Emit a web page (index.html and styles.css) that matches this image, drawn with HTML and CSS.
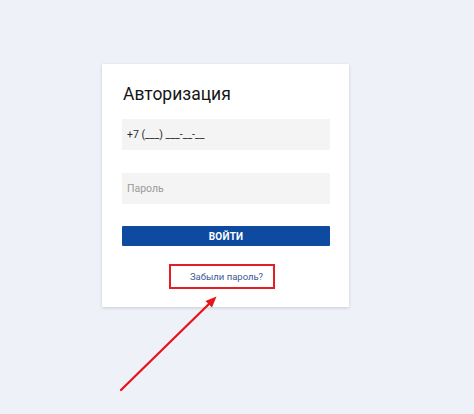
FILE: index.html
```html
<!DOCTYPE html>
<html lang="ru">
<head>
<meta charset="utf-8">
<title>Авторизация</title>
<link rel="stylesheet" href="styles.css">
</head>
<body>
<div class="page">
  <form class="card">
    <h1 class="title">Авторизация</h1>
    <div class="field field-phone"><span class="value">+7 (___) ___-__-__</span></div>
    <div class="field field-pass"><span class="placeholder">Пароль</span></div>
    <div class="btn">ВОЙТИ</div>
    <div class="forgot"><a class="link">Забыли пароль?</a></div>
    <div class="highlight"></div>
  </form>
  <svg class="arrow" width="474" height="414" viewBox="0 0 474 414">
    <line x1="121" y1="390" x2="211" y2="302" stroke="#e8141b" stroke-width="2.3" stroke-linecap="round"/>
    <polygon points="216.5,296.5 212,307.5 205.5,301" fill="#e8141b"/>
  </svg>
</div>
</body>
</html>
```
FILE: styles.css
```css
html, body {
  margin: 0;
  padding: 0;
}
body {
  background: #eef1f7;
  font-family: Roboto, "Noto Sans", sans-serif;
  width: 474px;
  height: 414px;
  overflow: hidden;
}
.page {
  position: relative;
  width: 474px;
  height: 414px;
  padding-top: 64px;
  box-sizing: border-box;
}
.card {
  position: relative;
  margin: 0 0 0 102px;
  width: 247px;
  height: 243px;
  box-sizing: border-box;
  background: #fff;
  box-shadow: 0 1px 3px rgba(0, 0, 0, 0.16);
  padding: 18px 19px 0 20px;
  display: flex;
  flex-direction: column;
}
.title {
  margin: 0;
  font-size: 17.5px;
  line-height: 24px;
  font-weight: 400;
  color: #151515;
  padding-left: 1px;
}
.field {
  height: 31px;
  background: #f4f4f4;
  display: flex;
  align-items: center;
  padding-left: 5px;
  font-size: 10.5px;
}
.field-phone {
  margin-top: 13px;
}
.field-pass {
  margin-top: 23px;
}
.value {
  color: #2a2a2a;
}
.placeholder {
  color: #9a9a9a;
}
.btn {
  margin-top: 22px;
  height: 20px;
  background: #0d4aa0;
  color: #fff;
  font-size: 10px;
  font-weight: 700;
  display: flex;
  align-items: center;
  justify-content: center;
  letter-spacing: 0.2px;
  border-radius: 1px;
}
.forgot {
  margin-top: 18px;
  height: 25px;
  display: flex;
  align-items: center;
  justify-content: center;
  padding-left: 1px;
}
.link {
  font-size: 9.5px;
  color: #3b5997;
}
.highlight {
  position: absolute;
  left: 67px;
  top: 200px;
  width: 106px;
  height: 25px;
  box-sizing: border-box;
  border: 2px solid #e31e24;
}
.arrow {
  position: absolute;
  left: 0;
  top: 0;
}
```
